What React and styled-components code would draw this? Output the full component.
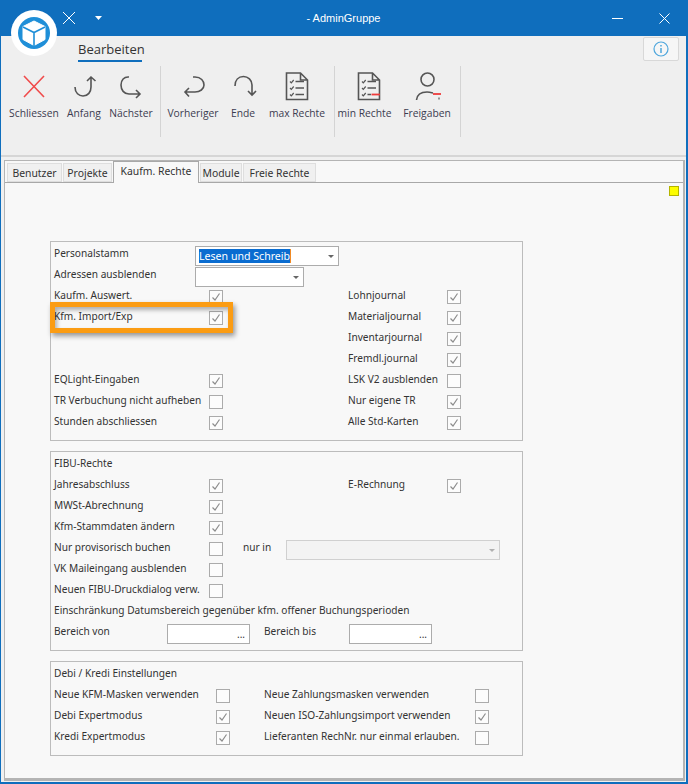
import React from "react";
import styled, { createGlobalStyle } from "styled-components";

const GlobalStyle = createGlobalStyle`
  html, body { margin: 0; padding: 0; background: #0f6ebd; }
  body { font-family: "Noto Sans", "Liberation Sans", sans-serif; }
`;

const Window = styled.div`
  position: relative;
  width: 688px;
  height: 784px;
  box-sizing: border-box;
  border: 2px solid #0f6ebd;
  border-top: 0;
  border-left-width: 1px;
  background: #f0f0f0;
  display: flex;
  flex-direction: column;
  overflow: hidden;
`;

const TitleBar = styled.div`
  height: 36px;
  flex: none;
  background: #0f6ebd;
  color: #fff;
  display: grid;
  grid-template-columns: 1fr auto 1fr;
  align-items: center;
`;

const QuickTools = styled.div`
  display: flex;
  align-items: center;
  padding-left: 61px;
  gap: 15px;
`;

const Title = styled.div`
  font-family: "Liberation Sans", sans-serif;
  font-size: 11px;
`;

const WinButtons = styled.div`
  display: flex;
  justify-content: flex-end;
  align-items: center;
  gap: 36px;
  padding-right: 16px;
`;

const LogoBadge = styled.div`
  position: absolute;
  z-index: 2;
  left: 10px;
  top: 10px;
  width: 46px;
  height: 46px;
`;

const Ribbon = styled.div`
  height: 121px;
  flex: none;
  box-sizing: border-box;
  background: #efefef;
  border-bottom: 2px solid #d6d6d6;
  position: relative;
`;

const RibbonTab = styled.div`
  margin-left: 77px;
  width: 64px;
  height: 26px;
  box-sizing: border-box;
  padding-top: 4px;
  border-bottom: 2px solid #0f6ebd;
  font-family: "Open Sans", sans-serif;
  font-size: 13px;
  line-height: 19px;
  white-space: nowrap;
  color: #333;
`;

const InfoButton = styled.div`
  position: absolute;
  right: 7px;
  top: 1px;
  width: 36px;
  height: 24px;
  box-sizing: border-box;
  border: 1px solid #d8d8d8;
  border-radius: 2px;
  background: #f6f6f6;
  display: flex;
  align-items: center;
  justify-content: center;
`;

const Toolbar = styled.div`
  display: flex;
  margin-top: 4px;
  height: 71px;
`;

const ToolGroup = styled.div`
  display: flex;
  width: ${(p) => p.$width}px;
  box-sizing: border-box;
  padding-left: ${(p) => p.$pad}px;
  border-right: 1px solid #d4d4d4;
`;

const ToolButton = styled.div`
  width: ${(p) => p.$width}px;
  margin-left: ${(p) => p.$offset || 0}px;
  display: flex;
  flex-direction: column;
  align-items: center;
  padding-top: 7px;
  font-family: "Open Sans", sans-serif;
  font-size: 10.3px;
  line-height: 14px;
  color: #3c3c50;
  white-space: nowrap;
  svg { display: block; margin-bottom: 7px; overflow: visible; }
`;

const Body = styled.div`
  flex: 1;
  padding: 3px 1px 1px 3px;
  display: flex;
`;

const TabFrame = styled.div`
  flex: 1;
  box-sizing: border-box;
  border: 1px solid #b4b4b4;
  border-right-width: 2px;
  border-bottom-width: 3px;
  background: #f8f8f8;
  display: flex;
  flex-direction: column;
`;

const TabStrip = styled.div`
  display: flex;
  height: 21px;
  flex: none;
  padding-left: 2px;
  gap: 1px;
  align-items: flex-end;
  position: relative;
  z-index: 1;
`;

const Tab = styled.div`
  width: ${(p) => p.$width}px;
  box-sizing: border-box;
  height: ${(p) => (p.$active ? 22 : 19)}px;
  margin-bottom: ${(p) => (p.$active ? -1 : 0)}px;
  border: 1px solid ${(p) => (p.$active ? "#a8a8a8" : "#dedede")};
  border-bottom: ${(p) => (p.$active ? "0" : "1px solid #dedede")};
  background: ${(p) => (p.$active ? "#f8f8f8" : "#f0f0f0")};
  font-size: 10.4px;
  line-height: 18px;
  text-align: center;
  color: #333;
  white-space: nowrap;
`;

const Panel = styled.div`
  flex: 1;
  position: relative;
  border-top: 1px solid #a8a8a8;
  padding: 58px 0 0 45px;
  display: flex;
  flex-direction: column;
  gap: 10px;
`;

const Marker = styled.div`
  position: absolute;
  right: 4px;
  top: 3px;
  width: 10px;
  height: 10px;
  box-sizing: border-box;
  background: #fdfd00;
  border: 1px solid #b4b400;
`;

const GroupBox = styled.div`
  width: 473px;
  height: ${(p) => p.$height}px;
  box-sizing: border-box;
  border: 1px solid #bcbcbc;
  padding: 1px 0 0 3px;
`;

const Row = styled.div`
  position: relative;
  height: 21px;
  display: grid;
  grid-template-columns: ${(p) => p.$cols || "141px 153px 99px 1fr"};
  grid-template-rows: 21px;
  align-items: center;
`;

const Label = styled.div`
  font-size: 10.15px;
  line-height: 21px;
  color: #333;
  white-space: nowrap;
  grid-column: ${(p) => p.$span || "auto"};
`;

const CheckCell = styled.div`
  padding-left: ${(p) => p.$indent ?? 14}px;
`;

const CheckBox = styled.div`
  width: 14px;
  height: 14px;
  margin-top: 2px;
  box-sizing: border-box;
  border: 1px solid #ababab;
  background: #fcfcfc;
  display: flex;
  align-items: center;
  justify-content: center;
`;

const SelectBox = styled.div`
  width: ${(p) => p.$width}px;
  height: 20px;
  margin-top: 5px;
  box-sizing: border-box;
  border: 1px solid ${(p) => (p.$disabled ? "#d0d0d0" : "#acacac")};
  background: ${(p) => (p.$disabled ? "#f3f3f3" : "#fff")};
  display: flex;
  align-items: center;
  justify-content: space-between;
  padding: 0 4px 0 3px;
  font-size: 10.6px;
  color: #333;
`;

const SelectedText = styled.span`
  background: #0a6cd0;
  color: #fff;
  line-height: 14px;
  white-space: nowrap;
  border-right: 1px solid #f08a24;
`;

const Arrow = styled.span`
  width: 0;
  height: 0;
  margin-left: auto;
  border-left: 3px solid transparent;
  border-right: 3px solid transparent;
  border-top: 3px solid ${(p) => (p.$disabled ? "#b0b0b0" : "#666")};
`;

const DateBox = styled(SelectBox)`
  width: 83px;
  padding: 0 4px 0 0;
  justify-content: flex-end;
  font-size: 10px;
  line-height: 16px;
`;

const Highlight = styled.div`
  position: absolute;
  left: -4px;
  top: -4px;
  width: 183px;
  height: 31px;
  box-sizing: border-box;
  border: 5px solid #fb9c13;
  box-shadow: 2px 3px 5px rgba(0, 0, 0, 0.4), inset 2px 3px 4px rgba(0, 0, 0, 0.3);
  pointer-events: none;
`;

const Tick = () => (
  <svg width="10" height="10" viewBox="0 0 10 10" fill="none" stroke="#8c8c8c" strokeWidth="1.2">
    <path d="M1.5 5.5 L4 8 L8.5 1.5" />
  </svg>
);

const Check = ({ on, indent }) => (
  <CheckCell $indent={indent}>
    <CheckBox>{on && <Tick />}</CheckBox>
  </CheckCell>
);

const Ico = ({ children }) => (
  <svg width="26" height="26" viewBox="0 0 26 26" fill="none" stroke="#555" strokeWidth="1.6">
    {children}
  </svg>
);

const ListIcon = ({ minus }) => (
  <Ico>
    <g transform={minus ? "translate(4 0)" : undefined}>
      <path d="M2.5 0 H16.5 L23.5 7 V26.5 H2.5 Z M16.5 0 V7 H23.5" strokeWidth="1.6" />
      <path d="M6 8.5 l1.3 1.3 l2.4 -2.8 M6 15 l1.3 1.3 l2.4 -2.8 M6 21.5 l1.3 1.3 l2.4 -2.8" strokeWidth="1.2" />
      <path d="M11.5 8.5 H20 M11.5 15 H20 M11.5 21.5 H15" strokeWidth="1.5" />
      {!minus && <path d="M15 21.5 H20" strokeWidth="1.5" />}
      {minus && <path d="M15.5 21.5 H24" stroke="#ee3b3b" strokeWidth="1.8" />}
    </g>
  </Ico>
);

const icons = {
  close: (
    <Ico>
      <path d="M3 3 L23 24 M23 3 L3 24" stroke="#f04b4b" strokeWidth="1.6" />
    </Ico>
  ),
  first: (
    <Ico>
      <path d="M4 14 C4 20 8 23 12 23 C17 23 20 19 20 14 V4 M16 8 L20 4 L24.5 8" />
    </Ico>
  ),
  next: (
    <Ico>
      <path d="M11 4 C6 3.5 3 7 3 12 C3 17 6 21 11 21 H22 M18 17 L22 21 L18 25" />
    </Ico>
  ),
  prev: (
    <Ico>
      <path d="M13 4 H15 C21 4 24 8 24 12 C24 16 20 19 15 19 H5 M9 15 L5 19 L9 23.5" />
    </Ico>
  ),
  end: (
    <Ico>
      <path d="M5 13 C5 7 8.5 3.5 13.5 3.5 C18 3.5 22 7 22 12 V22 M18 18 L22 22 L26 18" />
    </Ico>
  ),
  list: <ListIcon />,
  listMin: <ListIcon minus />,
  user: (
    <Ico>
      <circle cx="13.5" cy="6.5" r="6.5" />
      <path d="M2.5 27 C3 22 7 19 13 19 C15 19 17 19.5 19 20" />
      <path d="M19 21 H27" stroke="#ee3b3b" strokeWidth="1.8" />
      <path d="M25 24.5 V26.5" strokeWidth="1.2" />
    </Ico>
  ),
};

const groups = [
  {
    width: 160,
    pad: 5,
    items: [
      { label: "Schliessen", icon: "close", width: 56 },
      { label: "Anfang", icon: "first", width: 44 },
      { label: "Nächster", icon: "next", width: 50 },
    ],
  },
  {
    width: 174,
    pad: 4,
    items: [
      { label: "Vorheriger", icon: "prev", width: 56 },
      { label: "Ende", icon: "end", width: 44 },
      { label: "max Rechte", icon: "list", width: 64 },
    ],
  },
  {
    width: 126,
    pad: 3,
    items: [
      { label: "min Rechte", icon: "listMin", width: 53 },
      { label: "Freigaben", icon: "user", width: 58, offset: 7 },
    ],
  },
];

const App = () => (
  <Window>
    <GlobalStyle />
    <TitleBar>
      <QuickTools>
        <svg width="14" height="14" viewBox="0 0 14 14" stroke="#fff" strokeWidth="1" fill="none">
          <path d="M1 1 L13 13 M13 1 L1 13" />
        </svg>
        <svg width="7" height="4" viewBox="0 0 7 4" fill="#fff" style={{ marginLeft: 4 }}>
          <path d="M0 0 H7 L3.5 4 Z" />
        </svg>
      </QuickTools>
      <Title>- AdminGruppe</Title>
      <WinButtons>
        <svg width="11" height="11" viewBox="0 0 11 11" stroke="#fff" strokeWidth="1" fill="none">
          <path d="M0 5.5 H11" />
        </svg>
        <svg width="11" height="11" viewBox="0 0 11 11" stroke="#fff" strokeWidth="1" fill="none">
          <path d="M0.5 0.5 L10.5 10.5 M10.5 0.5 L0.5 10.5" />
        </svg>
      </WinButtons>
    </TitleBar>
    <LogoBadge>
      <svg width="46" height="46" viewBox="0 0 46 46">
        <circle cx="23" cy="23" r="23" fill="#fff" />
        <circle cx="23" cy="23" r="16" fill="#1f8fd8" />
        <path d="M23 11 L34 16.5 V29.5 L23 35.5 L12 29.5 V16.5 Z" fill="#fff" stroke="#fff" strokeWidth="1" strokeLinejoin="round" />
        <path d="M12 17 L23 22.5 L34 17 M23 22.5 V36" stroke="#1f8fd8" strokeWidth="1.6" fill="none" />
      </svg>
    </LogoBadge>
    <Ribbon>
      <RibbonTab>Bearbeiten</RibbonTab>
      <InfoButton>
        <svg width="16" height="16" viewBox="0 0 16 16" fill="none" stroke="#4ea6dc" strokeWidth="1.2">
          <circle cx="8" cy="8" r="7" />
          <path d="M8 7 V12 M8 4 V5.4" strokeWidth="1.5" />
        </svg>
      </InfoButton>
      <Toolbar>
        {groups.map((g) => (
          <ToolGroup key={g.width} $width={g.width} $pad={g.pad}>
            {g.items.map((b) => (
              <ToolButton key={b.label} $width={b.width} $offset={b.offset}>
                {icons[b.icon]}
                {b.label}
              </ToolButton>
            ))}
          </ToolGroup>
        ))}
      </Toolbar>
    </Ribbon>
    <Body>
      <TabFrame>
        <TabStrip>
          <Tab $width={55}>Benutzer</Tab>
          <Tab $width={49}>Projekte</Tab>
          <Tab $width={86} $active>Kaufm. Rechte</Tab>
          <Tab $width={42}>Module</Tab>
          <Tab $width={73}>Freie Rechte</Tab>
        </TabStrip>
        <Panel>
          <Marker />
          <GroupBox $height={200}>
            <Row>
              <Label>Personalstamm</Label>
              <SelectBox $width={144}>
                <SelectedText>Lesen und Schreib</SelectedText>
                <Arrow />
              </SelectBox>
            </Row>
            <Row>
              <Label>Adressen ausblenden</Label>
              <SelectBox $width={109}>
                <Arrow />
              </SelectBox>
            </Row>
            <Row>
              <Label>Kaufm. Auswert.</Label>
              <Check on />
              <Label>Lohnjournal</Label>
              <Check on indent={0} />
            </Row>
            <Row>
              <Highlight />
              <Label>Kfm. Import/Exp</Label>
              <Check on />
              <Label>Materialjournal</Label>
              <Check on indent={0} />
            </Row>
            <Row>
              <Label />
              <div />
              <Label>Inventarjournal</Label>
              <Check on indent={0} />
            </Row>
            <Row>
              <Label />
              <div />
              <Label>Fremdl.journal</Label>
              <Check on indent={0} />
            </Row>
            <Row>
              <Label>EQLight-Eingaben</Label>
              <Check on />
              <Label>LSK V2 ausblenden</Label>
              <Check indent={0} />
            </Row>
            <Row>
              <Label>TR Verbuchung nicht aufheben</Label>
              <Check />
              <Label>Nur eigene TR</Label>
              <Check on indent={0} />
            </Row>
            <Row>
              <Label>Stunden abschliessen</Label>
              <Check on />
              <Label>Alle Std-Karten</Label>
              <Check on indent={0} />
            </Row>
          </GroupBox>
          <GroupBox $height={200}>
            <Row>
              <Label>FIBU-Rechte</Label>
            </Row>
            <Row>
              <Label>Jahresabschluss</Label>
              <Check on />
              <Label>E-Rechnung</Label>
              <Check on indent={0} />
            </Row>
            <Row>
              <Label>MWSt-Abrechnung</Label>
              <Check on />
            </Row>
            <Row>
              <Label>Kfm-Stammdaten ändern</Label>
              <Check on />
            </Row>
            <Row $cols="141px 48px 43px 1fr">
              <Label>Nur provisorisch buchen</Label>
              <Check />
              <Label>nur in</Label>
              <SelectBox $width={214} $disabled>
                <Arrow $disabled />
              </SelectBox>
            </Row>
            <Row>
              <Label>VK Maileingang ausblenden</Label>
              <Check />
            </Row>
            <Row>
              <Label>Neuen FIBU-Druckdialog verw.</Label>
              <Check />
            </Row>
            <Row>
              <Label $span="1 / -1">Einschränkung Datumsbereich gegenüber kfm. offener Buchungsperioden</Label>
            </Row>
            <Row $cols="113px 97px 85px 1fr">
              <Label>Bereich von</Label>
              <DateBox>...</DateBox>
              <Label>Bereich bis</Label>
              <DateBox>...</DateBox>
            </Row>
          </GroupBox>
          <GroupBox $height={95}>
            <Row>
              <Label>Debi / Kredi Einstellungen</Label>
            </Row>
            <Row $cols="162px 48px 211px 1fr">
              <Label>Neue KFM-Masken verwenden</Label>
              <Check indent={0} />
              <Label>Neue Zahlungsmasken verwenden</Label>
              <Check indent={0} />
            </Row>
            <Row $cols="162px 48px 211px 1fr">
              <Label>Debi Expertmodus</Label>
              <Check on indent={0} />
              <Label>Neuen ISO-Zahlungsimport verwenden</Label>
              <Check on indent={0} />
            </Row>
            <Row $cols="162px 48px 211px 1fr">
              <Label>Kredi Expertmodus</Label>
              <Check on indent={0} />
              <Label>Lieferanten RechNr. nur einmal erlauben.</Label>
              <Check indent={0} />
            </Row>
          </GroupBox>
        </Panel>
      </TabFrame>
    </Body>
  </Window>
);

export default App;
